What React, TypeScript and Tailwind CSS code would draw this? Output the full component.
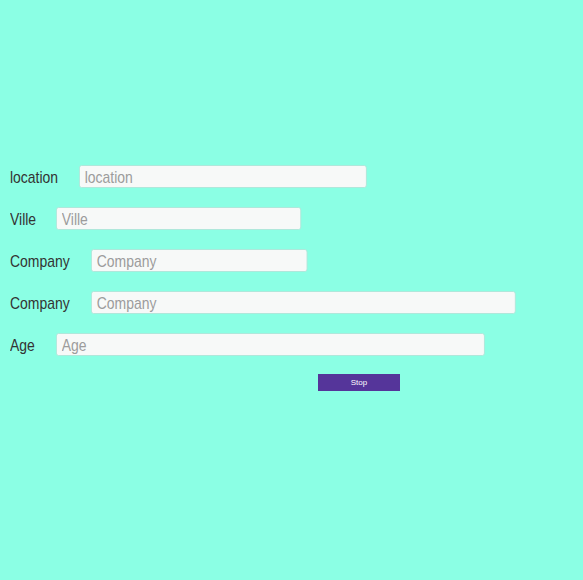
import React from 'react';

interface Field {
    label: string;
    labelWidth: string;
    inputWidth: string;
}

// text in the shot is a narrow face, so the Liberation Sans glyphs get squeezed to ~82%
const fields: Field[] = [
    { label: 'location', labelWidth: 'w-[69px]', inputWidth: 'w-[351px]' },
    { label: 'Ville', labelWidth: 'w-[46px]', inputWidth: 'w-[299px]' },
    { label: 'Company', labelWidth: 'w-[81px]', inputWidth: 'w-[264px]' },
    { label: 'Company', labelWidth: 'w-[81px]', inputWidth: 'w-[518px]' },
    { label: 'Age', labelWidth: 'w-[46px]', inputWidth: 'w-[523px]' },
];

export default function App() {
    return (
        <div className="min-h-[580px] overflow-hidden bg-[#8bffe4] pt-[165px] pl-[10px] font-['Liberation_Sans',Arial,sans-serif]">
            <div className="flex flex-col gap-[19px]">
                {fields.map((f, i) => (
                    <div key={i} className="flex items-center h-[23px]">
                        <label className={cn(f.labelWidth, 'shrink-0 whitespace-nowrap pt-[2px]')}>
                            <span className="inline-block origin-left scale-x-[0.82] text-[17px] text-[#333]">{f.label}</span>
                        </label>
                        <input
                            placeholder={f.label}
                            className={cn(f.inputWidth, 'shrink-0 origin-left scale-x-[0.82] h-[23px] rounded-[3px] border border-[#ade6d8] bg-[#f7f9f8] pl-[6px] pt-[2px] text-[17px] text-[#333] placeholder:text-[#9c9c9c] outline-none')}
                        />
                    </div>
                ))}
            </div>
            <div className="flex mt-[18px] pl-[308px]">
                <button className="w-[82px] h-[17px] bg-[#55359a] text-white text-[8px]">Stop</button>
            </div>
        </div>
    );
}

function cn(...c: string[]) {
    return c.join(' ');
}
